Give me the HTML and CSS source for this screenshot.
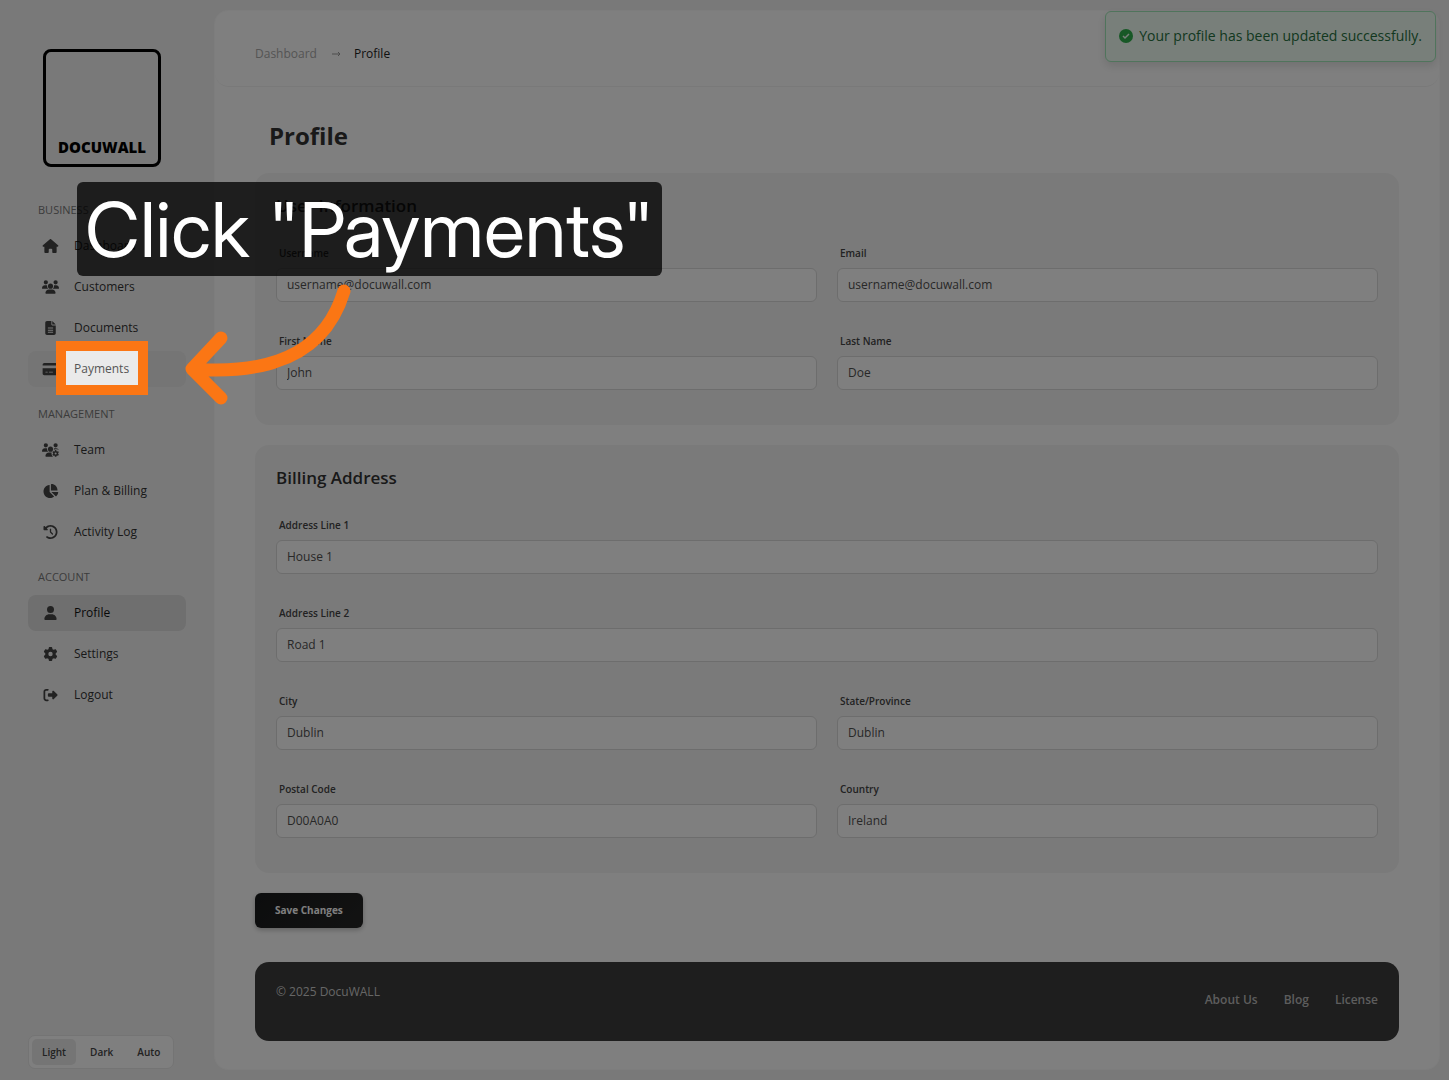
FILE: index.html
```html
<!DOCTYPE html>
<html lang="en">
<head>
<meta charset="utf-8">
<meta name="viewport" content="width=device-width, initial-scale=1">
<title>Profile - DocuWALL</title>
<link rel="stylesheet" href="styles.css">
</head>
<body>
<aside class="sidebar">
  <a class="logo" href="#">DOCUWALL</a>
  <nav class="nav">
    <h2 class="nav-title">BUSINESS</h2>
    <ul class="nav-list">
      <li class="nav-item"><a class="nav-link" href="#"><svg class="nav-icon" viewBox="0 0 576 512" aria-hidden="true"><path d="M575.8 255.5c0 18-15 32.1-32 32.1l-32 0 .7 160.2c0 2.7-.2 5.4-.5 8.1l0 16.2c0 22.1-17.9 40-40 40l-16 0c-1.1 0-2.2 0-3.3-.1c-1.4 .1-2.8 .1-4.2 .1L416 512l-24 0c-22.1 0-40-17.9-40-40l0-24 0-64c0-17.7-14.3-32-32-32l-64 0c-17.7 0-32 14.3-32 32l0 64 0 24c0 22.1-17.9 40-40 40l-24 0-31.9 0c-1.5 0-3-.1-4.5-.2c-1.2 .1-2.4 .2-3.6 .2l-16 0c-22.1 0-40-17.9-40-40l0-112c0-.9 0-1.9 .1-2.8l0-69.7-32 0c-18 0-32-14-32-32.1c0-9 3-17 10-24L266.4 8c7-7 15-8 22-8s15 2 21 7L564.8 231.5c8 7 12 15 11 24z"/></svg>Dashboard</a></li>
      <li class="nav-item"><a class="nav-link" href="#"><svg class="nav-icon" viewBox="0 0 640 512" aria-hidden="true"><path d="M144 0a80 80 0 1 1 0 160A80 80 0 1 1 144 0zM512 0a80 80 0 1 1 0 160A80 80 0 1 1 512 0zM0 298.7C0 239.8 47.8 192 106.7 192l42.7 0c15.9 0 31 3.5 44.6 9.7c-1.3 7.2-1.9 14.7-1.9 22.3c0 38.2 16.8 72.5 43.3 96L21.3 320C9.6 320 0 310.4 0 298.7zM405.3 320c26.6-23.5 43.3-57.8 43.3-96c0-7.6-.7-15-1.9-22.3c13.6-6.3 28.7-9.7 44.6-9.7l42.7 0C592.2 192 640 239.8 640 298.7c0 11.8-9.6 21.3-21.3 21.3l-213.3 0zM224 224a96 96 0 1 1 192 0 96 96 0 1 1 -192 0zM128 485.3C128 411.7 187.7 352 261.3 352l117.3 0C452.3 352 512 411.7 512 485.3c0 14.7-11.9 26.7-26.7 26.7l-330.7 0c-14.7 0-26.7-11.9-26.7-26.7z"/></svg>Customers</a></li>
      <li class="nav-item"><a class="nav-link" href="#"><svg class="nav-icon" viewBox="0 0 384 512" aria-hidden="true"><path fill-rule="evenodd" d="M64 0C28.7 0 0 28.7 0 64L0 448c0 35.3 28.7 64 64 64l256 0c35.3 0 64-28.7 64-64l0-288-128 0c-17.7 0-32-14.3-32-32L224 0 64 0zM256 0l0 128 128 0L256 0zM96 240H288V276H96zM96 316H288V352H96zM96 392H288V428H96z"/></svg>Documents</a></li>
      <li class="nav-item">
        <a class="nav-link is-hovered" href="#"><svg class="nav-icon" viewBox="0 0 576 512" aria-hidden="true"><path fill-rule="evenodd" d="M64 32C28.7 32 0 60.7 0 96l0 32 576 0 0-32c0-35.3-28.7-64-64-64L64 32zM576 224L0 224 0 416c0 35.3 28.7 64 64 64l448 0c35.3 0 64-28.7 64-64l0-192zM112 352l64 0c8.8 0 16 7.2 16 16s-7.2 16-16 16l-64 0c-8.8 0-16-7.2-16-16s7.2-16 16-16zm112 16c0-8.8 7.2-16 16-16l128 0c8.8 0 16 7.2 16 16s-7.2 16-16 16l-128 0c-8.8 0-16-7.2-16-16z"/></svg>Payments</a>
        <div class="spotlight"></div>
        <p class="hint">Click "Payments"</p>
        <svg class="hint-arrow" viewBox="184 282 170 124" aria-hidden="true"><path d="M344 291C328 344 285 376 193 369M221 338L192 369L221 398"/></svg>
      </li>
    </ul>
    <h2 class="nav-title">MANAGEMENT</h2>
    <ul class="nav-list">
      <li class="nav-item"><a class="nav-link" href="#"><svg class="nav-icon" viewBox="0 0 640 512" aria-hidden="true"><path d="M144 0a80 80 0 1 1 0 160A80 80 0 1 1 144 0zM512 0a80 80 0 1 1 0 160A80 80 0 1 1 512 0zM0 298.7C0 239.8 47.8 192 106.7 192l42.7 0c15.9 0 31 3.5 44.6 9.7c-1.3 7.2-1.9 14.7-1.9 22.3c0 38.2 16.8 72.5 43.3 96L21.3 320C9.6 320 0 310.4 0 298.7zM224 224a96 96 0 1 1 192 0 96 96 0 1 1 -192 0zM448 202c13-6 28-10 43-10h43c45 0 83 28 99 67-24-10-44-25-70-27-32-5-67-6-96 7-9 4-15 13-20 20zM128 485C128 412 188 352 261 352h101c-12 57 3 112 52 160H155c-15 0-27-12-27-27z"/><path transform="translate(388 260) scale(.49)" d="M495.9 166.6c3.2 8.7 .5 18.4-6.4 24.6l-43.3 39.4c1.1 8.3 1.7 16.8 1.7 25.4s-.6 17.1-1.7 25.4l43.3 39.4c6.9 6.2 9.6 15.9 6.4 24.6c-4.4 11.9-9.7 23.3-15.8 34.3l-4.7 8.1c-6.6 11-14 21.4-22.1 31.2c-5.9 7.2-15.7 9.6-24.5 6.8l-55.7-17.7c-13.4 10.3-28.2 18.9-44 25.4l-12.5 57.1c-2 9.1-9 16.3-18.2 17.8c-13.8 2.3-28 3.5-42.5 3.5s-28.7-1.2-42.5-3.5c-9.2-1.5-16.2-8.7-18.2-17.8l-12.5-57.1c-15.8-6.5-30.6-15.1-44-25.4L83.1 425.9c-8.8 2.8-18.6 .3-24.5-6.8c-8.1-9.8-15.5-20.2-22.1-31.2l-4.7-8.1c-6.1-11-11.4-22.4-15.8-34.3c-3.2-8.7-.5-18.4 6.4-24.6l43.3-39.4C64.6 273.1 64 264.6 64 256s.6-17.1 1.7-25.4L22.4 191.2c-6.9-6.2-9.6-15.9-6.4-24.6c4.4-11.9 9.7-23.3 15.8-34.3l4.7-8.1c6.6-11 14-21.4 22.1-31.2c5.9-7.2 15.7-9.6 24.5-6.8l55.7 17.7c13.4-10.3 28.2-18.9 44-25.4l12.5-57.1c2-9.1 9-16.3 18.2-17.8C227.3 1.2 241.5 0 256 0s28.7 1.2 42.5 3.5c9.2 1.5 16.2 8.7 18.2 17.8l12.5 57.1c15.8 6.5 30.6 15.1 44 25.4l55.7-17.7c8.8-2.8 18.6-.3 24.5 6.8c8.1 9.8 15.5 20.2 22.1 31.2l4.7 8.1c6.1 11 11.4 22.4 15.8 34.3zM256 336a80 80 0 1 0 0-160 80 80 0 1 0 0 160z"/></svg>Team</a></li>
      <li class="nav-item"><a class="nav-link" href="#"><svg class="nav-icon" viewBox="0 0 576 512" aria-hidden="true"><path d="M304 240l0-223.4c0-9 7-16.6 16-16.6C443.7 0 544 100.3 544 224c0 9-7.6 16-16.6 16L304 240zM32 272C32 150.7 122.1 50.3 239 34.3c9.2-1.3 17 6.1 17 15.4L256 288 412.5 444.5c6.7 6.7 6.2 17.7-1.5 23.1C371.8 495.6 323.8 512 272 512C139.5 512 32 404.6 32 272zm526.4 16c9.3 0 16.6 7.8 15.4 17c-7.7 55.9-34.6 105.6-73.9 142.3c-6 5.6-15.4 5.2-21.2-.7L320 288l238.4 0z"/></svg>Plan &amp; Billing</a></li>
      <li class="nav-item"><a class="nav-link" href="#"><svg class="nav-icon" viewBox="0 0 512 512" aria-hidden="true"><path d="M75 75L41 41C25.9 25.9 0 36.6 0 57.9L0 168c0 13.3 10.7 24 24 24l110.1 0c21.4 0 32.1-25.9 17-41l-30.8-30.8C155 85.5 203 64 256 64c106 0 192 86 192 192s-86 192-192 192c-40.8 0-78.6-12.7-109.7-34.4c-14.5-10.1-34.4-6.6-44.6 7.9s-6.6 34.4 7.9 44.6C151.2 495 201.7 512 256 512c141.4 0 256-114.6 256-256S397.4 0 256 0C185.3 0 121.3 28.7 75 75zm181 53c-13.3 0-24 10.7-24 24l0 104c0 6.4 2.5 12.5 7 17l72 72c9.4 9.4 24.6 9.4 33.9 0s9.4-24.6 0-33.9l-65-65 0-94.1c0-13.3-10.7-24-24-24z"/></svg>Activity Log</a></li>
    </ul>
    <h2 class="nav-title">ACCOUNT</h2>
    <ul class="nav-list">
      <li class="nav-item"><a class="nav-link is-active" href="#" aria-current="page"><svg class="nav-icon" viewBox="0 0 448 512" aria-hidden="true"><path d="M224 256A128 128 0 1 0 224 0a128 128 0 1 0 0 256zm-45.7 48C79.8 304 0 383.8 0 482.3C0 498.7 13.3 512 29.7 512l388.6 0c16.4 0 29.7-13.3 29.7-29.7C448 383.8 368.2 304 269.7 304l-91.4 0z"/></svg>Profile</a></li>
      <li class="nav-item"><a class="nav-link" href="#"><svg class="nav-icon" viewBox="0 0 512 512" aria-hidden="true"><path d="M495.9 166.6c3.2 8.7 .5 18.4-6.4 24.6l-43.3 39.4c1.1 8.3 1.7 16.8 1.7 25.4s-.6 17.1-1.7 25.4l43.3 39.4c6.9 6.2 9.6 15.9 6.4 24.6c-4.4 11.9-9.7 23.3-15.8 34.3l-4.7 8.1c-6.6 11-14 21.4-22.1 31.2c-5.9 7.2-15.7 9.6-24.5 6.8l-55.7-17.7c-13.4 10.3-28.2 18.9-44 25.4l-12.5 57.1c-2 9.1-9 16.3-18.2 17.8c-13.8 2.3-28 3.5-42.5 3.5s-28.7-1.2-42.5-3.5c-9.2-1.5-16.2-8.7-18.2-17.8l-12.5-57.1c-15.8-6.5-30.6-15.1-44-25.4L83.1 425.9c-8.8 2.8-18.6 .3-24.5-6.8c-8.1-9.8-15.5-20.2-22.1-31.2l-4.7-8.1c-6.1-11-11.4-22.4-15.8-34.3c-3.2-8.7-.5-18.4 6.4-24.6l43.3-39.4C64.6 273.1 64 264.6 64 256s.6-17.1 1.7-25.4L22.4 191.2c-6.9-6.2-9.6-15.9-6.4-24.6c4.4-11.9 9.7-23.3 15.8-34.3l4.7-8.1c6.6-11 14-21.4 22.1-31.2c5.9-7.2 15.7-9.6 24.5-6.8l55.7 17.7c13.4-10.3 28.2-18.9 44-25.4l12.5-57.1c2-9.1 9-16.3 18.2-17.8C227.3 1.2 241.5 0 256 0s28.7 1.2 42.5 3.5c9.2 1.5 16.2 8.7 18.2 17.8l12.5 57.1c15.8 6.5 30.6 15.1 44 25.4l55.7-17.7c8.8-2.8 18.6-.3 24.5 6.8c8.1 9.8 15.5 20.2 22.1 31.2l4.7 8.1c6.1 11 11.4 22.4 15.8 34.3zM256 336a80 80 0 1 0 0-160 80 80 0 1 0 0 160z"/></svg>Settings</a></li>
      <li class="nav-item"><a class="nav-link" href="#"><svg class="nav-icon" viewBox="0 0 512 512" aria-hidden="true"><path d="M377.9 105.9L500.7 228.7c7.2 7.2 11.3 17.1 11.3 27.3s-4.1 20.1-11.3 27.3L377.9 406.1c-6.4 6.4-15 9.9-24 9.9c-18.7 0-33.9-15.2-33.9-33.9l0-62.1-128 0c-17.7 0-32-14.3-32-32l0-64c0-17.7 14.3-32 32-32l128 0 0-62.1c0-18.7 15.2-33.9 33.9-33.9c9 0 17.6 3.6 24 9.9zM160 96L96 96c-17.7 0-32 14.3-32 32l0 256c0 17.7 14.3 32 32 32l64 0c17.7 0 32 14.3 32 32s-14.3 32-32 32l-64 0c-53 0-96-43-96-96L0 128C0 75 43 32 96 32l64 0c17.7 0 32 14.3 32 32s-14.3 32-32 32z"/></svg>Logout</a></li>
    </ul>
  </nav>
  <div class="theme" role="group" aria-label="Theme">
    <button class="theme-option is-selected" type="button" aria-pressed="true">Light</button>
    <button class="theme-option" type="button" aria-pressed="false">Dark</button>
    <button class="theme-option" type="button" aria-pressed="false">Auto</button>
  </div>
</aside>

<main class="main">
  <header class="topbar">
    <nav class="breadcrumb" aria-label="Breadcrumb">
      <a class="crumb" href="#">Dashboard</a>
      <svg class="crumb-arrow" viewBox="0 0 10 8" aria-hidden="true"><path d="M1 4H9M7 2L9 4L7 6"/></svg>
      <span class="crumb-current">Profile</span>
    </nav>
  </header>
  <div class="content">
    <h1 class="page-title">Profile</h1>
    <form class="form">
      <section class="card">
        <h2 class="card-title">User Information</h2>
        <div class="fields">
          <div class="field"><label class="label" for="username">Username</label><input class="input" id="username" type="text" value="username@docuwall.com"></div>
          <div class="field"><label class="label" for="email">Email</label><input class="input" id="email" type="email" value="username@docuwall.com"></div>
          <div class="field"><label class="label" for="first">First Name</label><input class="input" id="first" type="text" value="John"></div>
          <div class="field"><label class="label" for="last">Last Name</label><input class="input" id="last" type="text" value="Doe"></div>
        </div>
      </section>
      <section class="card">
        <h2 class="card-title">Billing Address</h2>
        <div class="fields">
          <div class="field field-wide"><label class="label" for="line1">Address Line 1</label><input class="input" id="line1" type="text" value="House 1"></div>
          <div class="field field-wide"><label class="label" for="line2">Address Line 2</label><input class="input" id="line2" type="text" value="Road 1"></div>
          <div class="field"><label class="label" for="city">City</label><input class="input" id="city" type="text" value="Dublin"></div>
          <div class="field"><label class="label" for="state">State/Province</label><input class="input" id="state" type="text" value="Dublin"></div>
          <div class="field"><label class="label" for="postal">Postal Code</label><input class="input" id="postal" type="text" value="D00A0A0"></div>
          <div class="field"><label class="label" for="country">Country</label><input class="input" id="country" type="text" value="Ireland"></div>
        </div>
      </section>
      <button class="save" type="submit">Save Changes</button>
    </form>
    <footer class="footer">
      <p class="copyright">© 2025 DocuWALL</p>
      <nav class="footer-links" aria-label="Footer">
        <a class="footer-link" href="#">About Us</a>
        <a class="footer-link" href="#">Blog</a>
        <a class="footer-link" href="#">License</a>
      </nav>
    </footer>
  </div>
</main>

<div class="toast" role="status">
  <svg class="toast-icon" viewBox="0 0 14 14" aria-hidden="true"><circle cx="7" cy="7" r="7"/><path d="M4 7L6 9L10 5"/></svg>
  Your profile has been updated successfully.
</div>
</body>
</html>
```
FILE: styles.css
```css
* { box-sizing: border-box; }

body {
  margin: 0;
  min-height: 100vh;
  display: flex;
  padding: 10px 9px 10px 0;
  background: #f3f3f3;
  color: #333;
  font: 12px/18px "Open Sans", "Noto Sans", sans-serif;
}

h1, h2, p, ul { margin: 0; padding: 0; }
ul { list-style: none; }
a { color: inherit; text-decoration: none; }
button, input { font: inherit; color: inherit; margin: 0; }

/* Sidebar */
.sidebar {
  flex: 0 0 214px;
  display: flex;
  flex-direction: column;
  padding: 39px 28px 1px;
}

.logo {
  display: flex;
  align-items: flex-end;
  justify-content: center;
  align-self: center;
  width: 118px;
  height: 118px;
  margin-right: 10px;
  padding-bottom: 8px;
  border: 3px solid #000;
  border-radius: 8px;
  color: #000;
  font-size: 15px;
  font-weight: 800;
}

.nav { width: 158px; margin-top: 35px; }

.nav-title {
  padding: 0 10px;
  margin: 0 0 10px;
  color: #777;
  font-size: 11px;
  font-weight: 400;
  line-height: 16px;
}

.nav-list {
  display: flex;
  flex-direction: column;
  gap: 5px;
  margin-bottom: 19px;
}

.nav-item { position: relative; }

.nav-link {
  display: flex;
  align-items: center;
  gap: 15px;
  height: 36px;
  padding-left: 14px;
  border-radius: 8px;
}

.nav-link.is-hovered { background: #eaeaea; color: #555; }
.nav-link.is-active { background: #dedede; color: #111; }

.nav-icon { width: 17px; height: 14px; fill: #444; }

.theme {
  display: flex;
  gap: 4px;
  align-self: flex-start;
  margin-top: auto;
  padding: 3px;
  border: 1px solid #e8e8e8;
  border-radius: 7px;
  background: #fff;
}

.theme-option {
  height: 26px;
  padding: 0 10px;
  border: 0;
  border-radius: 5px;
  background: none;
  font-size: 10px;
  font-weight: 600;
  color: #444;
}

.theme-option.is-selected { background: #ebebeb; }

/* Main panel */
.main {
  flex: 1;
  min-width: 0;
  border: 1px solid #fafafa;
  border-radius: 14px;
  background: #fff;
}

.topbar {
  display: flex;
  align-items: center;
  height: 76px;
  padding: 10px 40px 0;
  border-bottom: 1px solid #f3f3f3;
  border-radius: 14px;
}

.breadcrumb { display: flex; align-items: center; }
.crumb { color: #aaa; }
.crumb-arrow { width: 10px; height: 8px; margin: 0 13px 0 14px; fill: none; stroke: #999; }
.crumb-current { color: #222; }

.content { padding: 32px 40px 28px; }

.page-title {
  padding-left: 14px;
  margin-bottom: 20px;
  font-size: 24px;
  line-height: 34px;
}

.card {
  margin-bottom: 20px;
  padding: 20px 21px 35px;
  border-radius: 14px;
  background: #f5f5f5;
}

.card-title {
  margin-bottom: 26px;
  font-size: 17px;
  font-weight: 600;
  line-height: 26px;
}

.fields {
  display: grid;
  grid-template-columns: 1fr 1fr;
  gap: 31px 20px;
}

.field { display: flex; flex-direction: column; gap: 7px; min-width: 0; }
.field-wide { grid-column: 1 / -1; }

.label {
  padding-left: 3px;
  color: #444;
  font-size: 10px;
  font-weight: 600;
  line-height: 16px;
}

.input {
  width: 100%;
  height: 34px;
  padding: 0 10px 1px;
  border: 1px solid #dadada;
  border-radius: 6px;
  background: #fff;
  color: #505050;
}

.save {
  display: block;
  height: 35px;
  padding: 0 20px 2px;
  border: 0;
  border-radius: 6px;
  background: linear-gradient(135deg, #181a1b, #262626);
  box-shadow: 0 2px 5px rgba(0, 0, 0, .25);
  color: #fff;
  font-size: 10px;
  font-weight: 700;
}

.footer {
  display: flex;
  justify-content: space-between;
  align-items: center;
  height: 79px;
  margin-top: 34px;
  padding: 0 21px;
  border-radius: 14px;
  background: #3c3c3c;
  color: #ccc;
}

.copyright { padding-bottom: 20px; }
.footer-links { display: flex; gap: 26px; padding-bottom: 4px; }
.footer-link { font-weight: 600; color: #bbb; }

/* Notification over the top right corner */
.toast {
  position: absolute;
  z-index: 1;
  top: 11px;
  right: 13px;
  display: flex;
  align-items: center;
  gap: 6px;
  height: 51px;
  padding: 0 13px 2px;
  border: 1px solid #a0e8b8;
  border-radius: 6px;
  background: #f0fff4;
  box-shadow: 0 4px 10px rgba(0, 0, 0, .12);
  color: #267040;
  font-size: 14px;
  font-weight: 500;
}

.toast-icon { width: 14px; height: 14px; fill: #2eb04c; }
.toast-icon path { fill: none; stroke: #f0fff4; stroke-width: 1.5; }

/* Guided tour: dims the page around the highlighted item */
.spotlight {
  position: absolute;
  z-index: 10;
  top: -10px;
  left: 28px;
  width: 92px;
  height: 54px;
  border: 10px solid #fb7614;
  box-shadow: 0 0 0 9999px rgba(0, 0, 0, .5);
  pointer-events: none;
}

.hint {
  position: absolute;
  z-index: 11;
  bottom: 111px;
  left: 49px;
  height: 94px;
  padding: 0 8px;
  border-radius: 6px;
  background: rgba(0, 0, 0, .76);
  color: #fff;
  font: 400 76px/94px "Inter Display", Inter, sans-serif;
  font-variation-settings: "opsz" 32;
  white-space: nowrap;
}

.hint-arrow {
  position: absolute;
  z-index: 12;
  top: -69px;
  left: 156px;
  width: 170px;
  height: 124px;
  fill: none;
  stroke: #fb7614;
  stroke-width: 13;
  stroke-linecap: round;
  stroke-linejoin: round;
}
```
